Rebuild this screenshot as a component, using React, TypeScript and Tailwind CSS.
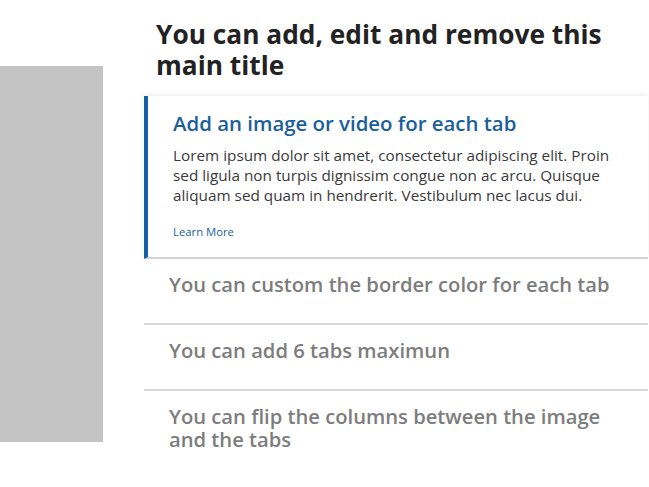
import React from "react";

type Tab = {
  title: string;
  body?: string;
};

const TABS: Tab[] = [
  {
    title: "Add an image or video for each tab",
    body: "Lorem ipsum dolor sit amet, consectetur adipiscing elit. Proin sed ligula non turpis dignissim congue non ac arcu. Quisque aliquam sed quam in hendrerit. Vestibulum nec lacus dui.",
  },
  { title: "You can custom the border color for each tab" },
  { title: "You can add 6 tabs maximun" },
  { title: "You can flip the columns between the image and the tabs" },
];

export default function App() {
  const active = 0;

  return (
    <div className="flex min-h-[487px] bg-white font-['Open_Sans',sans-serif]">
      <div className="mt-[66px] h-[376px] w-[103px] shrink-0 bg-[#c4c4c4]" />

      <div className="ml-[41px] w-[504px] shrink-0">
        <h1 className="pl-3 pt-[19px] text-[26.3px] font-bold leading-[31px] text-[#222222]">
          You can add, edit and remove this main title
        </h1>

        <div className="mt-[15px]">
          {TABS.map((tab, index) =>
            index === active ? (
              <div
                key={index}
                className="border-b-2 border-l-4 border-b-[#d4d4d4] border-l-[#1560a3] bg-white pb-[17px] pl-[25px] pr-[25px] pt-[15px] shadow-[0_-2px_6px_rgba(0,0,0,0.06)]"
              >
                <h2 className="text-[20.4px] font-semibold leading-6 text-[#1b5e9d]">
                  {tab.title}
                </h2>
                <p className="mt-[10px] text-[15.3px] leading-5 text-[#3a3a3a]">
                  {tab.body}
                </p>
                <a className="mt-[19px] block text-[11.3px] font-medium leading-4 text-[#1b5e9d]">
                  Learn More
                </a>
              </div>
            ) : (
              <div
                key={index}
                className={`pb-[27px] pl-[25px] pr-[25px] pt-[14px] ${
                  index < TABS.length - 1 ? "border-b-2 border-[#d9d9d9]" : ""
                }`}
              >
                <h3 className="text-[20.2px] font-semibold leading-[23px] text-[#7d7d7d]">
                  {tab.title}
                </h3>
              </div>
            )
          )}
        </div>
      </div>
    </div>
  );
}
